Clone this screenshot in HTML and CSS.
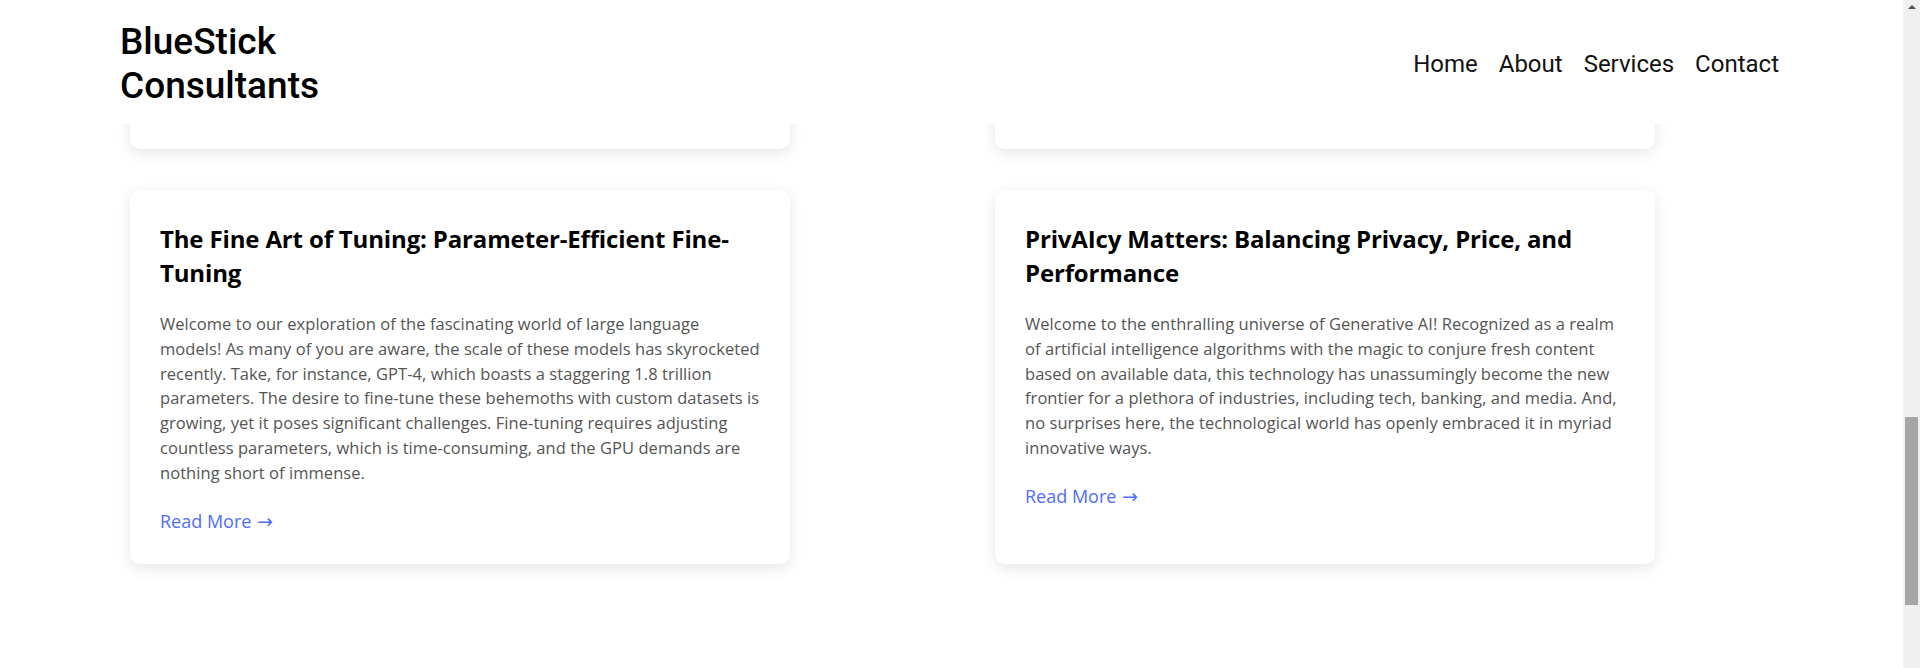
FILE: index.html
```html
<!DOCTYPE html>
<html lang="en">
<head>
<meta charset="utf-8">
<title>BlueStick Consultants</title>
<link rel="stylesheet" href="styles.css">
</head>
<body>
<div class="page">
  <header class="site-header">
    <div class="logo">BlueStick<br>Consultants</div>
    <nav class="nav">
      <a href="#">Home</a>
      <a href="#">About</a>
      <a href="#">Services</a>
      <a href="#">Contact</a>
    </nav>
  </header>
  <main class="posts">
    <article class="card card-stub"></article>
    <article class="card card-stub"></article>
    <article class="card">
      <h3 class="card-title">The Fine Art of Tuning: Parameter-Efficient Fine-Tuning</h3>
      <p class="card-text">Welcome to our exploration of the fascinating world of large language models! As many of you are aware, the scale of these models has skyrocketed recently. Take, for instance, GPT-4, which boasts a staggering 1.8 trillion parameters. The desire to fine-tune these behemoths with custom datasets is growing, yet it poses significant challenges. Fine-tuning requires adjusting countless parameters, which is time-consuming, and the GPU demands are nothing short of immense.</p>
      <a class="read-more" href="#">Read More <span class="arrow">→</span></a>
    </article>
    <article class="card">
      <h3 class="card-title">PrivAIcy Matters: Balancing Privacy, Price, and Performance</h3>
      <p class="card-text">Welcome to the enthralling universe of Generative AI! Recognized as a realm of artificial intelligence algorithms with the magic to conjure fresh content based on available data, this technology has unassumingly become the new frontier for a plethora of industries, including tech, banking, and media. And, no surprises here, the technological world has openly embraced it in myriad innovative ways.</p>
      <a class="read-more" href="#">Read More <span class="arrow">→</span></a>
    </article>
  </main>
</div>
<div class="scrollbar">
  <div class="scroll-arrow"></div>
  <div class="scroll-thumb"></div>
</div>
</body>
</html>
```

FILE: styles.css
```css
* {
  box-sizing: border-box;
}

html, body {
  margin: 0;
  padding: 0;
  height: 100%;
}

body {
  display: flex;
  overflow: hidden;
  background: #ffffff;
  font-family: "Open Sans", "Noto Sans", sans-serif;
  color: #000;
}

.page {
  flex: 1;
  position: relative;
  overflow: hidden;
}

.site-header {
  position: fixed;
  top: 0;
  left: 0;
  right: 17px;
  height: 124px;
  z-index: 10;
  background: #ffffff;
  display: flex;
  justify-content: space-between;
  align-items: center;
  padding: 0 124px 0 120px;
  font-family: Roboto, "Open Sans", sans-serif;
}

.logo {
  font-size: 37px;
  line-height: 44px;
  font-weight: 500;
  color: #000;
  padding-top: 4px;
}

.nav {
  display: flex;
  gap: 21px;
  padding-top: 4px;
}

.nav a {
  font-size: 24px;
  color: #111;
  text-decoration: none;
}

.posts {
  display: grid;
  grid-template-columns: 660px 660px;
  grid-template-rows: 149px auto;
  column-gap: 205px;
  row-gap: 41px;
  padding-left: 130px;
}

.card {
  background: #ffffff;
  border-radius: 10px;
  box-shadow: 0 4px 15px rgba(0, 0, 0, 0.1);
  padding: 32px 27px 29px 30px;
  display: flex;
  flex-direction: column;
  align-items: flex-start;
}

.card-stub {
  padding: 0;
}

.card-title {
  margin: 0 0 22px;
  font-size: 24px;
  line-height: 34px;
  font-weight: 700;
  color: #000;
  letter-spacing: -0.15px;
}

.card-text {
  margin: 0 0 22px;
  font-size: 16.5px;
  line-height: 24.8px;
  color: #555;
  letter-spacing: 0.05px;
}

.read-more {
  font-size: 18px;
  line-height: 27px;
  color: #4f6ef7;
  text-decoration: none;
}

.arrow {
  font-family: "DejaVu Sans", sans-serif;
  font-size: 19px;
  margin-left: 1px;
}

.scrollbar {
  width: 17px;
  flex: none;
  background: #f0f0f0;
  display: flex;
  flex-direction: column;
  align-items: center;
}

.scroll-arrow {
  margin-top: 5px;
  width: 0;
  height: 0;
  border-left: 4px solid transparent;
  border-right: 4px solid transparent;
  border-bottom: 4px solid #505050;
}

.scroll-thumb {
  margin-top: 408px;
  width: 13px;
  height: 188px;
  background: #a6a6a6;
}
```
